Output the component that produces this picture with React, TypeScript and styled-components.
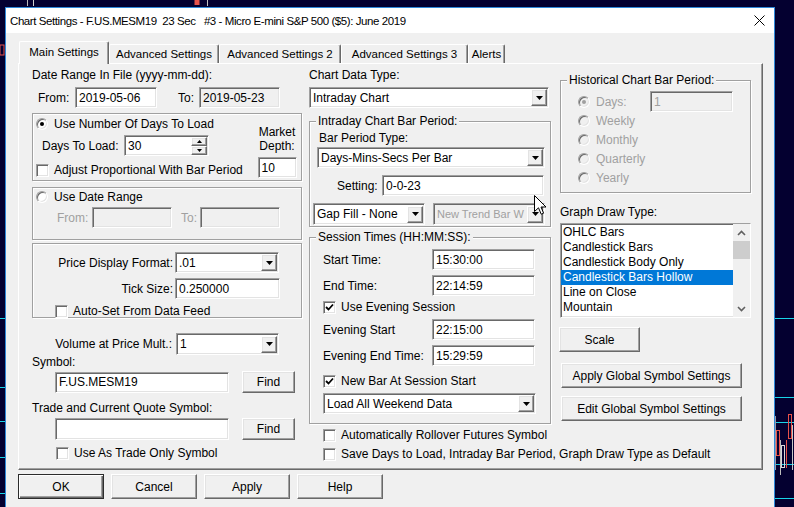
import React from 'react';
import styled, { createGlobalStyle, css } from 'styled-components';

const GlobalStyle = createGlobalStyle`
  html, body { margin: 0; padding: 0; background: #040030; }
  body { font-family: "Liberation Sans", Arial, sans-serif; font-size: 12px; color: #000; }
  * { box-sizing: border-box; }
`;

const sunken = css`
  border-top: 1px solid #a0a0a0;
  border-left: 1px solid #a0a0a0;
  border-right: 1px solid #fff;
  border-bottom: 1px solid #fff;
  box-shadow: inset 1px 1px 0 #696969, inset -1px -1px 0 #e3e3e3;
`;

const raised = css`
  border: 1px solid;
  border-color: #fff #696969 #696969 #fff;
  box-shadow: inset -1px -1px 0 #a0a0a0, inset 1px 1px 0 #e3e3e3;
`;

const Desktop = styled.div`
  position: relative;
  width: 794px;
  height: 507px;
  overflow: hidden;
  background: #040030;
`;

const ChartSvg = styled.svg`
  position: absolute;
  left: 0;
  top: 0;
`;

const Window = styled.div`
  position: absolute;
  left: 5px;
  top: 7px;
  width: 770px;
  height: 520px;
  border: 1px solid #2f88d8;
  background: #f0f0f0;
  display: flex;
  flex-direction: column;
`;

const TitleBar = styled.div`
  height: 25px;
  background: #fff;
  display: flex;
  align-items: center;
  padding-left: 4px;
  white-space: pre;
  font-size: 11.5px;
  letter-spacing: -0.42px;
`;

const CloseBox = styled.div`
  margin-left: auto;
  width: 30px;
  height: 25px;
  display: flex;
  align-items: center;
  justify-content: center;
`;

const Body = styled.div`
  padding: 8px 0 0 12px;
`;

const TabStrip = styled.div`
  display: flex;
  align-items: flex-end;
  height: 22px;
  padding-left: 1px;
`;

const Tab = styled.div<{ $w: number; $active?: boolean }>`
  width: ${p => p.$w}px;
  height: 19px;
  display: flex;
  align-items: center;
  justify-content: center;
  font-size: 11.5px;
  white-space: nowrap;
  background: #f0f0f0;
  border-top: 1px solid #fff;
  border-left: 1px solid #fff;
  border-right: 1px solid #696969;
  box-shadow: inset -1px 0 0 #a0a0a0;
  border-radius: 2px 2px 0 0;
  ${p =>
    p.$active &&
    css`
      height: 23px;
      margin-bottom: -1px;
      padding-bottom: 2px;
      position: relative;
      z-index: 1;
    `}
`;

const Panel = styled.div`
  width: 745px;
  height: 407px;
  border: 1px solid;
  border-color: #fff #696969 #696969 #fff;
  box-shadow: inset -1px -1px 0 #a0a0a0;
  display: flex;
  align-items: flex-start;
  padding: 4px 10px 0 13px;
`;

const Column = styled.div<{ $w: number; $ml?: number }>`
  width: ${p => p.$w}px;
  margin-left: ${p => p.$ml ?? 0}px;
  display: flex;
  flex-direction: column;
  flex-shrink: 0;
`;

const Label = styled.div<{ $w?: number; $ml?: number; $mt?: number; $right?: boolean; $dis?: boolean }>`
  line-height: 14px;
  height: 14px;
  white-space: nowrap;
  flex-shrink: 0;
  ${p => p.$w !== undefined && `width: ${p.$w}px;`}
  margin-left: ${p => p.$ml ?? 0}px;
  margin-top: ${p => p.$mt ?? 0}px;
  text-align: ${p => (p.$right ? 'right' : 'left')};
  color: ${p => (p.$dis ? '#a0a0a0' : '#000')};
`;

const TwoLine = styled.div`
  line-height: 14px;
  text-align: center;
  margin-top: 11px;
`;

const Row = styled.div<{ $mt?: number; $pl?: number; $h?: number }>`
  display: flex;
  align-items: center;
  margin-top: ${p => p.$mt ?? 0}px;
  padding-left: ${p => p.$pl ?? 0}px;
  ${p => p.$h !== undefined && `height: ${p.$h}px;`}
  white-space: nowrap;
`;

const Field = styled.div<{ $w: number; $h?: number; $ml?: number; $ro?: boolean; $dis?: boolean }>`
  ${sunken};
  width: ${p => p.$w}px;
  height: ${p => p.$h ?? 21}px;
  margin-left: ${p => p.$ml ?? 0}px;
  flex-shrink: 0;
  display: flex;
  align-items: center;
  padding: 0 1px 0 3px;
  background: ${p => (p.$ro || p.$dis ? '#f0f0f0' : '#fff')};
  color: ${p => (p.$dis ? '#a0a0a0' : '#000')};
  white-space: nowrap;
  overflow: hidden;
`;

const FieldText = styled.span<{ $fs?: number }>`
  flex: 1;
  overflow: hidden;
  font-size: ${p => p.$fs ?? 12}px;
`;

const DropBtn = styled.div`
  ${raised};
  width: 16px;
  height: 17px;
  flex-shrink: 0;
  background: #f0f0f0;
  display: flex;
  align-items: center;
  justify-content: center;
`;

const Spin = styled.div`
  display: flex;
  flex-direction: column;
  flex-shrink: 0;
`;

const SpinBtn = styled.div`
  ${raised};
  width: 16px;
  height: 9px;
  background: #f0f0f0;
  display: flex;
  align-items: center;
  justify-content: center;
`;

const Btn = styled.div<{ $w: number; $h?: number; $ml?: number; $mt?: number; $def?: boolean }>`
  ${raised};
  width: ${p => p.$w}px;
  height: ${p => p.$h ?? 25}px;
  margin-left: ${p => p.$ml ?? 0}px;
  margin-top: ${p => p.$mt ?? 0}px;
  flex-shrink: 0;
  background: #f0f0f0;
  display: flex;
  align-items: center;
  justify-content: center;
  white-space: nowrap;
  ${p =>
    p.$def &&
    css`
      border-color: #2c2c2c;
      box-shadow: inset 1px 1px 0 #fff, inset -1px -1px 0 #696969, inset -2px -2px 0 #a0a0a0;
    `}
`;

const Frame = styled.div<{ $h: number; $mt: number }>`
  height: ${p => p.$h}px;
  margin-top: ${p => p.$mt}px;
  border: 1px solid #a0a0a0;
  box-shadow: inset 1px 1px 0 #fff, 1px 1px 0 #fff;
`;

const FrameSplit = styled.div`
  display: flex;
`;

const FrameLeft = styled.div`
  width: 223px;
  display: flex;
  flex-direction: column;
`;

const FrameRight = styled.div`
  width: 40px;
  margin-left: 1px;
  display: flex;
  flex-direction: column;
  align-items: center;
`;

const Group = styled.fieldset<{ $h: number; $mt: number }>`
  margin: ${p => p.$mt}px 0 0 0;
  padding: 0;
  min-width: 0;
  height: ${p => p.$h}px;
  border: 1px solid #a0a0a0;
  box-shadow: inset 1px 1px 0 #fff, 1px 1px 0 #fff;
`;

const GroupTitle = styled.legend`
  margin-left: 6px;
  padding: 0 2px;
  line-height: 14px;
  background: #f0f0f0;
  white-space: nowrap;
`;

const GroupBody = styled.div<{ $pl: number }>`
  padding-left: ${p => p.$pl}px;
  display: flex;
  flex-direction: column;
`;

const RadioMark = styled.span<{ $on?: boolean; $dis?: boolean }>`
  ${sunken};
  width: 12px;
  height: 12px;
  border-radius: 50%;
  flex-shrink: 0;
  display: grid;
  place-items: center;
  background: ${p => (p.$dis ? '#f0f0f0' : '#fff')};
  &::after {
    content: '';
    width: 4px;
    height: 4px;
    border-radius: 50%;
    background: ${p => (p.$dis ? '#a0a0a0' : '#000')};
    display: ${p => (p.$on ? 'block' : 'none')};
  }
`;

const CheckMark = styled.span`
  ${sunken};
  width: 13px;
  height: 13px;
  flex-shrink: 0;
  background: #fff;
  display: grid;
  place-items: center;
`;

const Gap = styled.span<{ $w: number }>`
  width: ${p => p.$w}px;
  flex-shrink: 0;
`;

const ListBox = styled.div`
  ${sunken};
  width: 191px;
  height: 95px;
  margin-top: 4px;
  background: #fff;
  display: flex;
  overflow: hidden;
`;

const ListItems = styled.div`
  flex: 1;
  padding-top: 1px;
`;

const ListItem = styled.div<{ $sel?: boolean }>`
  height: 15px;
  line-height: 15px;
  padding-left: 2px;
  white-space: nowrap;
  background: ${p => (p.$sel ? '#0078d7' : 'transparent')};
  color: ${p => (p.$sel ? '#fff' : '#000')};
`;

const ScrollBar = styled.div`
  width: 17px;
  display: flex;
  flex-direction: column;
  background: #f0f0f0;
`;

const ScrollArrow = styled.div`
  height: 17px;
  display: flex;
  align-items: center;
  justify-content: center;
`;

const ScrollThumb = styled.div`
  height: 18px;
  background: #cdcdcd;
`;

const ScrollTrack = styled.div`
  flex: 1;
`;

const BtnRow = styled.div`
  display: flex;
  gap: 7px;
  margin-top: 4px;
`;

const Cursor = styled.svg`
  position: absolute;
  left: 534px;
  top: 195px;
`;

const DownTri = () => (
  <svg width="7" height="4" viewBox="0 0 7 4">
    <polygon points="0,0 7,0 3.5,4" fill="#000" />
  </svg>
);

const UpTri = () => (
  <svg width="5" height="3" viewBox="0 0 5 3">
    <polygon points="0,3 5,3 2.5,0" fill="#000" />
  </svg>
);

const SmallDown = () => (
  <svg width="5" height="3" viewBox="0 0 5 3">
    <polygon points="0,0 5,0 2.5,3" fill="#000" />
  </svg>
);

const Chevron = ({ up }: { up?: boolean }) => (
  <svg width="9" height="6" viewBox="0 0 9 6">
    <polyline
      points={up ? '1,5 4.5,1.5 8,5' : '1,1 4.5,4.5 8,1'}
      fill="none"
      stroke="#606060"
      strokeWidth="1.6"
    />
  </svg>
);

const Radio = ({ on, dis, children, gap = 6 }: { on?: boolean; dis?: boolean; children: React.ReactNode; gap?: number }) => (
  <>
    <RadioMark $on={on} $dis={dis} />
    <Gap $w={gap} />
    <Label $dis={dis}>{children}</Label>
  </>
);

const Check = ({ on, children }: { on?: boolean; children: React.ReactNode }) => (
  <>
    <CheckMark>
      {on && (
        <svg width="9" height="9" viewBox="0 0 9 9">
          <polyline points="1,4 3.5,6.5 8,1.5" fill="none" stroke="#000" strokeWidth="1.8" />
        </svg>
      )}
    </CheckMark>
    <Gap $w={5} />
    <Label>{children}</Label>
  </>
);

const Combo = ({
  w,
  h,
  ml,
  dis,
  fs,
  children,
}: {
  w: number;
  h?: number;
  ml?: number;
  dis?: boolean;
  fs?: number;
  children: React.ReactNode;
}) => (
  <Field $w={w} $h={h} $ml={ml} $dis={dis}>
    <FieldText $fs={fs}>{children}</FieldText>
    <DropBtn>
      <DownTri />
    </DropBtn>
  </Field>
);

const ChartBackdrop = () => (
  <ChartSvg width="794" height="507" viewBox="0 0 794 507">
    {[318, 387, 421, 457, 493].map(y => (
      <line key={'l' + y} x1="0" x2="5" y1={y + 0.5} y2={y + 0.5} stroke="#19d4e8" strokeWidth="1" />
    ))}
    {[318, 397, 422, 464, 498].map(y => (
      <line key={'r' + y} x1="775" x2="794" y1={y + 0.5} y2={y + 0.5} stroke="#19d4e8" strokeWidth="1" />
    ))}
    <rect x="0" y="45" width="4" height="10" fill="none" stroke="#e8524a" strokeWidth="1" />
    <line x1="27.5" x2="27.5" y1="0" y2="6" stroke="#b8b8b8" />
    <line x1="33.5" x2="33.5" y1="0" y2="6" stroke="#d0d0d0" />
    <rect x="194.5" y="0" width="5" height="5" fill="#e8524a" />
    <line x1="207.5" x2="207.5" y1="0" y2="6" stroke="#c0c0c0" />
    <line x1="775.5" x2="775.5" y1="416" y2="470" stroke="#9a9aa8" />
    <rect x="776.5" y="430.5" width="3" height="25" fill="none" stroke="#e8524a" />
    <line x1="780.5" x2="780.5" y1="440" y2="475" stroke="#bdbdbd" />
    <rect x="781.5" y="445.5" width="3" height="22" fill="none" stroke="#d8d8d8" />
    <line x1="786.5" x2="786.5" y1="440" y2="468" stroke="#e8524a" />
    <rect x="788.5" y="414.5" width="3" height="24" fill="none" stroke="#e8524a" />
    <line x1="792.5" x2="792.5" y1="425" y2="470" stroke="#c8c8c8" />
  </ChartSvg>
);

const App = () => {
  return (
    <Desktop>
      <GlobalStyle />
      <ChartBackdrop />
      <Window>
        <TitleBar>
          {'Chart Settings - F.US.MESM19  23 Sec   #3 - Micro E-mini S&P 500 ($5): June 2019'}
          <CloseBox>
            <svg width="11" height="11" viewBox="0 0 11 11">
              <path d="M0.5 0.5 L10.5 10.5 M10.5 0.5 L0.5 10.5" stroke="#000" strokeWidth="1" />
            </svg>
          </CloseBox>
        </TitleBar>
        <Body>
          <TabStrip>
            <Tab $w={90} $active>Main Settings</Tab>
            <Tab $w={110}>Advanced Settings</Tab>
            <Tab $w={122}>Advanced Settings 2</Tab>
            <Tab $w={127}>Advanced Settings 3</Tab>
            <Tab $w={37}>Alerts</Tab>
          </TabStrip>
          <Panel>
            <Column $w={270}>
              <Label>Date Range In File (yyyy-mm-dd):</Label>
              <Row $mt={5} $pl={6}>
                <Label $w={37}>From:</Label>
                <Field $w={82}>2019-05-06</Field>
                <Label $w={21} $ml={21}>To:</Label>
                <Field $w={81} $ro>2019-05-23</Field>
              </Row>
              <Frame $h={68} $mt={5}>
                <FrameSplit>
                  <FrameLeft>
                    <Row $mt={3} $pl={3}>
                      <Radio on>Use Number Of Days To Load</Radio>
                    </Row>
                    <Row $mt={4} $pl={9}>
                      <Label $w={82}>Days To Load:</Label>
                      <Field $w={85}>
                        <FieldText>30</FieldText>
                        <Spin>
                          <SpinBtn>
                            <UpTri />
                          </SpinBtn>
                          <SpinBtn>
                            <SmallDown />
                          </SpinBtn>
                        </Spin>
                      </Field>
                    </Row>
                    <Row $mt={7} $pl={3}>
                      <Check>Adjust Proportional With Bar Period</Check>
                    </Row>
                  </FrameLeft>
                  <FrameRight>
                    <TwoLine>
                      Market
                      <br />
                      Depth:
                    </TwoLine>
                    <Row $mt={4}>
                      <Field $w={39}>10</Field>
                    </Row>
                  </FrameRight>
                </FrameSplit>
              </Frame>
              <Frame $h={53} $mt={6}>
                <Row $mt={2} $pl={3}>
                  <Radio>Use Date Range</Radio>
                </Row>
                <Row $mt={3} $pl={24}>
                  <Label $w={35} $dis>From:</Label>
                  <Field $w={80} $ro />
                  <Label $w={19} $ml={9} $dis>To:</Label>
                  <Field $w={80} $ro />
                </Row>
              </Frame>
              <Frame $h={75} $mt={3}>
                <Row $mt={8}>
                  <Label $w={140} $right>Price Display Format:</Label>
                  <Combo w={104} ml={2}>.01</Combo>
                </Row>
                <Row $mt={5}>
                  <Label $w={140} $right>Tick Size:</Label>
                  <Field $w={105} $ml={2}>0.250000</Field>
                </Row>
                <Row $mt={5} $pl={22}>
                  <Check>Auto-Set From Data Feed</Check>
                </Row>
              </Frame>
              <Row $mt={15}>
                <Label $w={140} $right>Volume at Price Mult.:</Label>
                <Combo w={103} h={22} ml={4}>1</Combo>
              </Row>
              <Label>Symbol:</Label>
              <Row $mt={2} $pl={23}>
                <Field $w={174}>F.US.MESM19</Field>
                <Btn $w={53} $h={22} $ml={13}>Find</Btn>
              </Row>
              <Label $mt={8}>Trade and Current Quote Symbol:</Label>
              <Row $mt={3} $pl={23}>
                <Field $w={174} $h={22} />
                <Btn $w={53} $h={22} $ml={13}>Find</Btn>
              </Row>
              <Row $mt={6} $pl={24}>
                <Check>Use As Trade Only Symbol</Check>
              </Row>
            </Column>

            <Column $w={242} $ml={7}>
              <Label>Chart Data Type:</Label>
              <Row $mt={5}>
                <Combo w={240}>Intraday Chart</Combo>
              </Row>
              <Group $h={113} $mt={6}>
                <GroupTitle>Intraday Chart Bar Period:</GroupTitle>
                <GroupBody $pl={7}>
                  <Label $mt={3} $ml={2}>Bar Period Type:</Label>
                  <Row $mt={2}>
                    <Combo w={228}>Days-Mins-Secs Per Bar</Combo>
                  </Row>
                  <Row $mt={7} $pl={20}>
                    <Label $w={45}>Setting:</Label>
                    <Field $w={162}>0-0-23</Field>
                  </Row>
                  <Row $mt={7}>
                    <Combo w={112} h={22} ml={-4}>Gap Fill - None</Combo>
                    <Combo w={112} h={22} ml={8} dis fs={11}>New Trend Bar W</Combo>
                  </Row>
                </GroupBody>
              </Group>
              <Group $h={194} $mt={3}>
                <GroupTitle>Session Times (HH:MM:SS):</GroupTitle>
                <GroupBody $pl={13}>
                  <Row $mt={5}>
                    <Label $w={109}>Start Time:</Label>
                    <Field $w={103}>15:30:00</Field>
                  </Row>
                  <Row $mt={5}>
                    <Label $w={109}>End Time:</Label>
                    <Field $w={103}>22:14:59</Field>
                  </Row>
                  <Row $mt={4}>
                    <Check on>Use Evening Session</Check>
                  </Row>
                  <Row $mt={5}>
                    <Label $w={109}>Evening Start</Label>
                    <Field $w={103}>22:15:00</Field>
                  </Row>
                  <Row $mt={5}>
                    <Label $w={109}>Evening End Time:</Label>
                    <Field $w={103}>15:29:59</Field>
                  </Row>
                  <Row $mt={8}>
                    <Check on>New Bar At Session Start</Check>
                  </Row>
                  <Row $mt={5}>
                    <Combo w={213}>Load All Weekend Data</Combo>
                  </Row>
                </GroupBody>
              </Group>
              <Row $mt={4} $pl={14}>
                <Check>Automatically Rollover Futures Symbol</Check>
              </Row>
              <Row $mt={5} $pl={14}>
                <Check>Save Days to Load, Intraday Bar Period, Graph Draw Type as Default</Check>
              </Row>
            </Column>

            <Column $w={191} $ml={9}>
              <Group $h={120} $mt={5}>
                <GroupTitle>Historical Chart Bar Period:</GroupTitle>
                <GroupBody $pl={17}>
                  <Row $mt={5} $h={19}>
                    <RadioMark $on $dis />
                    <Gap $w={6} />
                    <Label $w={54} $dis>Days:</Label>
                    <Field $w={83} $dis>1</Field>
                  </Row>
                  <Row $h={19}>
                    <Radio dis>Weekly</Radio>
                  </Row>
                  <Row $h={19}>
                    <Radio dis>Monthly</Radio>
                  </Row>
                  <Row $h={19}>
                    <Radio dis>Quarterly</Radio>
                  </Row>
                  <Row $h={19}>
                    <Radio dis>Yearly</Radio>
                  </Row>
                </GroupBody>
              </Group>
              <Label $mt={12}>Graph Draw Type:</Label>
              <ListBox>
                <ListItems>
                  <ListItem>OHLC Bars</ListItem>
                  <ListItem>Candlestick Bars</ListItem>
                  <ListItem>Candlestick Body Only</ListItem>
                  <ListItem $sel>Candlestick Bars Hollow</ListItem>
                  <ListItem>Line on Close</ListItem>
                  <ListItem>Mountain</ListItem>
                </ListItems>
                <ScrollBar>
                  <ScrollArrow>
                    <Chevron up />
                  </ScrollArrow>
                  <ScrollThumb />
                  <ScrollTrack />
                  <ScrollArrow>
                    <Chevron />
                  </ScrollArrow>
                </ScrollBar>
              </ListBox>
              <Btn $w={81} $ml={-1} $mt={9}>Scale</Btn>
              <Btn $w={181} $ml={1} $mt={11}>Apply Global Symbol Settings</Btn>
              <Btn $w={181} $ml={1} $mt={8}>Edit Global Symbol Settings</Btn>
            </Column>
          </Panel>
          <BtnRow>
            <Btn $w={86} $def>OK</Btn>
            <Btn $w={86}>Cancel</Btn>
            <Btn $w={86}>Apply</Btn>
            <Btn $w={86}>Help</Btn>
          </BtnRow>
        </Body>
      </Window>
      <Cursor width="13" height="21" viewBox="0 0 13 21">
        <path
          d="M0.5 0.5 L0.5 16.5 L4.5 12.8 L7.2 19.2 L9.6 18.2 L7 12 L12 12 Z"
          fill="#fff"
          stroke="#000"
          strokeWidth="1"
          strokeLinejoin="miter"
        />
      </Cursor>
    </Desktop>
  );
};

export default App;
